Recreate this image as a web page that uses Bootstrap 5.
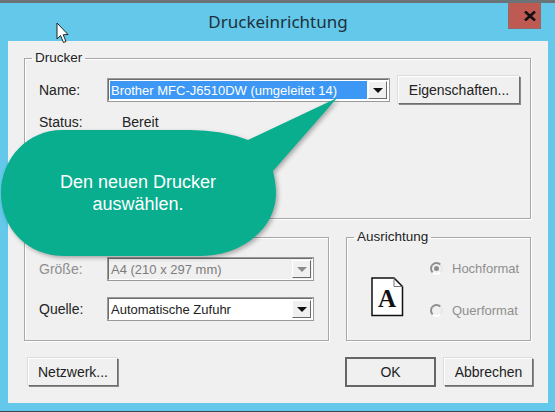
<!DOCTYPE html>
<html lang="de">
<head>
    <meta charset="UTF-8">
    <meta name="viewport" content="width=device-width, initial-scale=1.0">
    <title>Druckeinrichtung</title>
    <link href="https://cdn.jsdelivr.net/npm/bootstrap@5.3.0/dist/css/bootstrap.min.css" rel="stylesheet">
    <style>
        html, body { height: 100%; }
        body {
            background: #63c8ea;
            font-family: "Liberation Sans", Arial, sans-serif;
            font-size: 14px;
            color: #222;
            overflow: hidden;
        }
        .win-frame {
            position: relative;
            width: 555px;
            height: 412px;
            border-top: 3px solid #6b7378;
            border-bottom: 1px solid #3b4a52;
            padding: 0 7px 8px 8px;
        }
        .win-title {
            height: 38px;
            position: relative;
            font-family: "Noto Sans", "Open Sans", sans-serif;
            font-size: 17px;
            color: #20303a;
        }
        .win-close {
            position: absolute;
            top: 0;
            right: 7px;
            width: 33px;
            height: 26px;
            padding-left: 10px;
            background: #bf5a52;
            border: 1px solid #8f6a66;
            border-top: 0;
        }
        .win-client {
            background: #f0f0f0;
            height: 362px;
            padding: 9px 15px 0 16px;
        }
        .grp {
            border: 1px solid #a8a8a8;
            box-shadow: 1px 1px 0 #fff, inset 1px 1px 0 #fff;
            margin: 0;
            min-width: 0;
            padding: 0;
        }
        .grp legend {
            float: none;
            width: auto;
            margin: 0 0 0 7px;
            padding: 0 3px;
            font-size: 13.5px;
            line-height: 16px;
        }
        .grp-printer { height: 169px; margin-right: 2px; }
        .grp-printer-body { padding: 10px 10px 0 14px; }
        .grp-row { margin-top: 10px; margin-right: 2px; }
        .grp-paper { width: 305px; height: 112px; }
        .grp-paper-body { padding: 12px 14px 0 14px; }
        .grp-orient { width: 185px; height: 112px; }
        .grp-orient-body { padding: 13px 0 0 24px; }
        .lbl { width: 68px; flex: none; }
        .lbl-off { color: #8f8f8f; }
        .status-val { padding-left: 15px; }
        .combo {
            height: 24px;
            background: #fff;
            border: 2px solid;
            border-color: #6e6e6e #fff #fff #6e6e6e;
            outline: 1px solid #9a9a9a;
            outline-offset: -1px;
            padding: 1px;
            font-size: 13px;
            line-height: 19px;
            white-space: nowrap;
        }
        .combo-printer { width: 283px; }
        .combo-paper { width: 207px; }
        .combo-off { background: #f0f0f0; color: #7c7c7c; }
        .combo-text { flex: 1; padding-left: 1px; }
        .combo-sel { background: #3d98f5; color: #fff; margin-right: 1px; }
        .combo-arrow {
            width: 19px;
            flex: none;
            background: #f0f0f0;
            border: 1px solid;
            border-color: #fff #6a6a6a #6a6a6a #fff;
        }
        .combo-arrow i {
            border-left: 5px solid transparent;
            border-right: 5px solid transparent;
            border-top: 5px solid #111;
        }
        .combo-off .combo-arrow i { border-top-color: #8a8a8a; }
        .btn.win-btn {
            --bs-btn-font-size: 14px;
            --bs-btn-color: #222;
            --bs-btn-bg: #f0f0f0;
            --bs-btn-hover-bg: #f0f0f0;
            --bs-btn-border-radius: 0;
            --bs-btn-padding-x: 0;
            --bs-btn-padding-y: 0;
            border: 1px solid;
            border-color: #fff #6e6e6e #6e6e6e #fff;
            box-shadow: 1px 1px 0 #8a8a8a, -1px -1px 0 #dcdcdc;
            height: 28px;
        }
        .btn.win-btn-default { outline: 2px solid #666; outline-offset: -1px; box-shadow: none; }
        .w-props { width: 122px; }
        .w-net { width: 90px; }
        .w-ok { width: 89px; }
        .foot { margin-top: 17px; padding-left: 4px; }
        .foot-right { gap: 9px; }
        .doc-icon { margin-top: 19px; flex: none; }
        .radio-col { margin-left: 26px; font-size: 13px; line-height: 21px; }
        .radio-row { gap: 9px; }
        .radio-row + .radio-row { margin-top: 21px; }
        .radio-dot {
            width: 13px;
            height: 13px;
            border-radius: 50%;
            border: 2px solid;
            border-color: #8d8d8d #e8e8e8 #fff #8d8d8d;
            background: #f0f0f0;
            flex: none;
            position: relative;
        }
        .radio-on::after {
            content: "";
            position: absolute;
            left: 2px;
            top: 2px;
            width: 5px;
            height: 5px;
            border-radius: 50%;
            background: #8d8d8d;
        }
        .cursor-arrow { position: absolute; left: 56px; top: 19px; }
        .bubble {
            position: absolute;
            left: 0;
            top: 93px;
            filter: drop-shadow(2px 2px 2px rgba(0, 0, 0, .3));
        }
        .bubble-text {
            position: absolute;
            left: 2px;
            top: 168px;
            width: 272px;
            color: #fff;
            font-size: 18px;
            line-height: 22px;
            text-align: center;
        }
    </style>
</head>
<body>
    <div class="win-frame">
        <div class="win-title d-flex justify-content-center align-items-center">
            Druckeinrichtung
            <div class="win-close d-flex align-items-center justify-content-center">
                <svg width="12" height="10" viewBox="0 0 12 10"><path d="M1 0.5 L11 9.5 M11 0.5 L1 9.5" stroke="#111" stroke-width="2.6" fill="none"/></svg>
            </div>
        </div>
        <div class="win-client">
            <fieldset class="grp grp-printer">
                <legend>Drucker</legend>
                <div class="grp-printer-body">
                    <div class="d-flex align-items-center justify-content-between">
                        <span class="lbl">Name:</span>
                        <div class="combo combo-printer d-flex">
                            <span class="combo-text combo-sel">Brother MFC-J6510DW (umgeleitet 14)</span>
                            <span class="combo-arrow d-flex align-items-center justify-content-center"><i></i></span>
                        </div>
                        <button class="btn win-btn w-props ms-auto" type="button">Eigenschaften...</button>
                    </div>
                    <div class="d-flex mt-2">
                        <span class="lbl">Status:</span>
                        <span class="status-val">Bereit</span>
                    </div>
                </div>
            </fieldset>

            <div class="d-flex justify-content-between grp-row">
                <fieldset class="grp grp-paper">
                    <legend>Papier</legend>
                    <div class="grp-paper-body">
                        <div class="d-flex align-items-center">
                            <span class="lbl lbl-off">Größe:</span>
                            <div class="combo combo-paper combo-off d-flex">
                                <span class="combo-text">A4 (210 x 297 mm)</span>
                                <span class="combo-arrow d-flex align-items-center justify-content-center"><i></i></span>
                            </div>
                        </div>
                        <div class="d-flex align-items-center mt-3">
                            <span class="lbl">Quelle:</span>
                            <div class="combo combo-paper d-flex">
                                <span class="combo-text">Automatische Zufuhr</span>
                                <span class="combo-arrow d-flex align-items-center justify-content-center"><i></i></span>
                            </div>
                        </div>
                    </div>
                </fieldset>
                <fieldset class="grp grp-orient">
                    <legend>Ausrichtung</legend>
                    <div class="grp-orient-body d-flex align-items-start">
                        <svg class="doc-icon" width="33" height="40" viewBox="0 0 33 40">
                            <path d="M1 1 H23 L31.5 9.5 V38.5 H1 Z" fill="#fff" stroke="#111" stroke-width="1.5"/>
                            <path d="M23 1 V9.5 H31.5" fill="none" stroke="#777"/>
                            <text x="16" y="30" text-anchor="middle" font-family="Liberation Serif, serif" font-weight="700" font-size="25" fill="#111">A</text>
                        </svg>
                        <div class="radio-col lbl-off">
                            <div class="radio-row d-flex align-items-center"><span class="radio-dot radio-on"></span>Hochformat</div>
                            <div class="radio-row d-flex align-items-center"><span class="radio-dot"></span>Querformat</div>
                        </div>
                    </div>
                </fieldset>
            </div>

            <div class="d-flex foot">
                <button class="btn win-btn w-net" type="button">Netzwerk...</button>
                <div class="ms-auto d-flex foot-right">
                    <button class="btn win-btn win-btn-default w-ok" type="button">OK</button>
                    <button class="btn win-btn w-ok" type="button">Abbrechen</button>
                </div>
            </div>
        </div>

        <svg class="cursor-arrow" width="14" height="23" viewBox="0 0 14 23">
            <path d="M1 1 V17 L4.5 13.5 L7.5 20.5 L10 19.5 L7.2 12.8 L12 12.5 Z" fill="#fff" stroke="#222" stroke-width="1"/>
        </svg>
        <svg class="bubble" width="345" height="172" viewBox="0 0 345 172">
            <path d="M62 34 H190 Q222 34 248 44 L337 2 L273 75 Q276 88 276 97 C276 134 240 160 200 160 H64 C28 160 1 133 1 97 C1 62 28 34 62 34 Z" fill="#08ae8e"/>
        </svg>
        <div class="bubble-text">Den neuen Drucker<br>auswählen.</div>
    </div>
    <script src="https://cdn.jsdelivr.net/npm/bootstrap@5.3.0/dist/js/bootstrap.bundle.min.js"></script>
</body>
</html>
